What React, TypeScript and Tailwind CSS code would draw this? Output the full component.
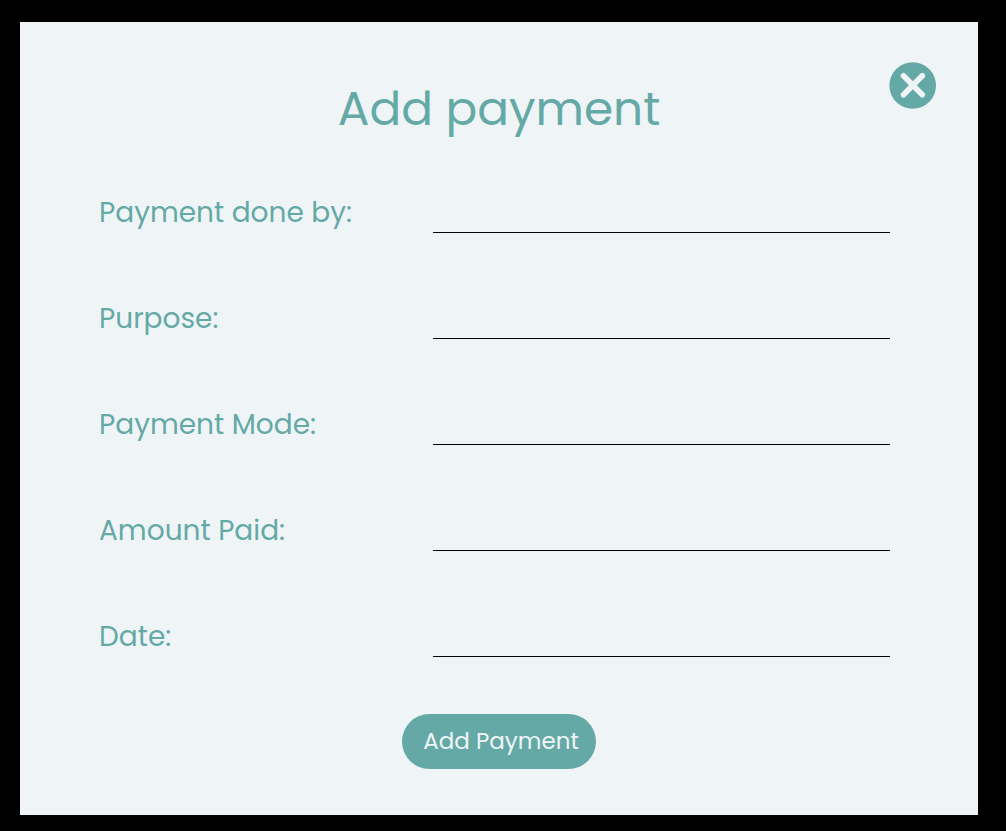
const fields = [
  { id: "payer", label: "Payment done by:" },
  { id: "purpose", label: "Purpose:" },
  { id: "mode", label: "Payment Mode:" },
  { id: "amount", label: "Amount Paid:" },
  { id: "date", label: "Date:" },
];

function CloseButton() {
  return (
    <button type="button" aria-label="Close" className="absolute top-10 right-[42px] cursor-pointer">
      <svg viewBox="0 0 47 47" className="size-[47px]" aria-hidden="true">
        <circle cx="23.7" cy="23.5" r="23.3" fill="#65a9a6" />
        <path d="M14.5 13.7 33.3 32.7 M33.3 13.7 14.5 32.7" stroke="#eff5f7" strokeWidth="5.6" strokeLinecap="round" />
      </svg>
    </button>
  );
}

export default function App() {
  return (
    <div className="min-h-screen bg-black pt-5.5 pr-7 pb-4 pl-5 font-['Poppins','Open_Sans',sans-serif] text-[#65a9a6]">
      <main className="relative bg-[#eff5f7] pt-14 pb-11.5">
        <CloseButton />
        <h1 className="text-center text-[47px] leading-[62px]">Add payment</h1>
        <form className="mt-11">
          <div className="flex flex-col gap-12 pr-22 pl-[79px]">
            {fields.map(({ id, label }) => (
              <div key={id} className="flex h-[58px] items-center">
                <label htmlFor={id} className="w-[334px] shrink-0 text-[28px] leading-10">
                  {label}
                </label>
                <input
                  id={id}
                  name={id}
                  type="text"
                  className="h-10 min-w-0 flex-1 border-b border-black bg-transparent text-xl outline-none"
                />
              </div>
            ))}
          </div>
          <button
            type="submit"
            className="mx-auto mt-12 block h-[55px] w-[194px] cursor-pointer rounded-full bg-[#65a9a6] pl-1 text-[23px] text-[#eff5f7]"
          >
            Add Payment
          </button>
        </form>
      </main>
    </div>
  );
}
